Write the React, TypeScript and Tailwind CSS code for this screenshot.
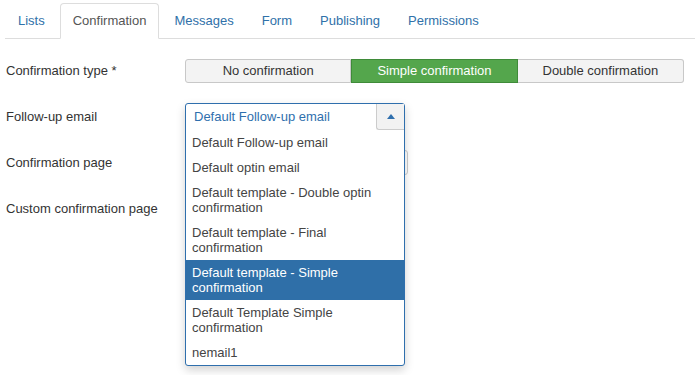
import React from "react";

const tabs = ["Lists", "Confirmation", "Messages", "Form", "Publishing", "Permissions"];

const options = [
  "Default Follow-up email",
  "Default optin email",
  "Default template - Double optin confirmation",
  "Default template - Final confirmation",
  "Default template - Simple confirmation",
  "Default Template Simple confirmation",
  "nemail1",
];

const App = () => {
  return (
    <div className="w-[695px] h-[375px] bg-white text-[13px] text-[#333] font-['Liberation_Sans',Arial,sans-serif] overflow-hidden">
      {/* tabs */}
      <div className="pt-[3px] pl-[5px]">
        <div className="flex border-b border-[#ddd]">
          {tabs.map((t) => (
            <div
              key={t}
              className={
                t === "Confirmation"
                  ? "h-[36px] -mb-px mr-[2px] px-[12px] flex items-center bg-white border border-[#ddd] border-b-white rounded-t-[4px] text-[#555]"
                  : "h-[36px] -mb-px mr-[2px] px-[12px] flex items-center border border-transparent text-[#3071a9]"
              }
            >
              {t}
            </div>
          ))}
        </div>
      </div>

      <div className="pl-[6px] pt-[20px] flex flex-col">
        {/* confirmation type */}
        <div className="flex items-center h-[24px]">
          <div className="w-[179px]">Confirmation type *</div>
          <div className="w-[499px] h-[24px] grid grid-cols-3">
            <div className="flex items-center justify-center bg-[#f3f3f3] border border-[#c8c8c8] rounded-l-[3px]">
              No confirmation
            </div>
            <div className="flex items-center justify-center bg-[#54a64c] border border-[#3f8b39] text-white">
              Simple confirmation
            </div>
            <div className="flex items-center justify-center bg-[#f3f3f3] border border-l-0 border-[#c8c8c8] rounded-r-[3px]">
              Double confirmation
            </div>
          </div>
        </div>

        {/* follow-up email */}
        <div className="flex items-center h-[27px] mt-[20px]">
          <div className="w-[179px]">Follow-up email</div>
          <div className="relative w-[220px] h-[27px]">
            <div className="absolute left-0 top-0 z-10 w-[220px] bg-white border border-[#2f6fad] rounded-[3px] shadow-[0_4px_10px_rgba(0,0,0,0.18)]">
              <div className="relative h-[26px] flex items-center pl-[8px] text-[#2f6fad]">
                Default Follow-up email
                <div className="absolute right-0 top-0 w-[28px] h-[26px] bg-[#f2f2f2] border-l border-b border-[#ccc] rounded-bl-[3px] flex items-center justify-center">
                  <svg width="8" height="5" viewBox="0 0 8 5">
                    <path d="M0 5 L4 0 L8 5 Z" fill="#2f6fad" />
                  </svg>
                </div>
              </div>
              {options.map((o) => (
                <div
                  key={o}
                  className={
                    o === "Default template - Simple confirmation"
                      ? "px-[6px] py-[5px] leading-[15px] bg-[#2f6fa8] text-white"
                      : "px-[6px] py-[5px] leading-[15px] text-[#444]"
                  }
                >
                  {o}
                </div>
              ))}
            </div>
          </div>
        </div>

        {/* confirmation page */}
        <div className="flex items-center h-[25px] mt-[20px]">
          <div className="w-[179px]">Confirmation page</div>
          <div className="w-[223px] h-[25px] border border-[#ccc] rounded-[3px] bg-white"></div>
        </div>

        {/* custom confirmation page */}
        <div className="flex items-center h-[25px] mt-[21px]">
          <div className="w-[179px]">Custom confirmation page</div>
        </div>
      </div>
    </div>
  );
};

export default App;
